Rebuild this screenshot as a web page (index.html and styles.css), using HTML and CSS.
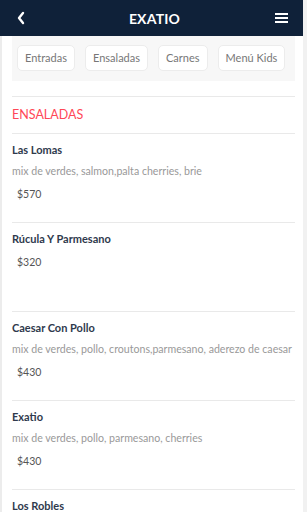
FILE: index.html
```html
<!DOCTYPE html>
<html lang="es">
<head>
    <meta charset="UTF-8">
    <meta name="viewport" content="width=device-width, initial-scale=1.0">
    <title>EXATIO</title>
    <link rel="stylesheet" href="styles.css">
</head>
<body>
    <div class="page">
        <header class="topbar">
            <svg class="back" width="10" height="14" viewBox="0 0 10 14">
                <path d="M7 2 L3 7 L7 12" fill="none" stroke="#fff" stroke-width="2.4" stroke-linecap="round" stroke-linejoin="round"/>
            </svg>
            <h1>EXATIO</h1>
            <svg class="menu" width="14" height="12" viewBox="0 0 14 12">
                <rect x="0" y="1" width="13" height="2" fill="#fff"/>
                <rect x="0" y="5" width="13" height="2" fill="#fff"/>
                <rect x="0" y="9" width="13" height="2" fill="#fff"/>
            </svg>
        </header>

        <main class="content">
            <nav class="categories">
                <span class="cat">Entradas</span>
                <span class="cat">Ensaladas</span>
                <span class="cat">Carnes</span>
                <span class="cat">Menú Kids</span>
                <span class="cat">Postres</span>
            </nav>

            <h2 class="section-title">ENSALADAS</h2>

            <div class="item">
                <div class="name">Las Lomas</div>
                <div class="desc">mix de verdes, salmon,palta cherries, brie</div>
                <div class="price">$570</div>
            </div>
            <div class="item">
                <div class="name">Rúcula Y Parmesano</div>
                <div class="desc"></div>
                <div class="price">$320</div>
            </div>
            <div class="item">
                <div class="name">Caesar Con Pollo</div>
                <div class="desc">mix de verdes, pollo, croutons,parmesano, aderezo de caesar</div>
                <div class="price">$430</div>
            </div>
            <div class="item">
                <div class="name">Exatio</div>
                <div class="desc">mix de verdes, pollo, parmesano, cherries</div>
                <div class="price">$430</div>
            </div>
            <div class="item">
                <div class="name">Los Robles</div>
            </div>
        </main>
    </div>
</body>
</html>
```

FILE: styles.css
```css
html, body {
    margin: 0;
    padding: 0;
    height: 100%;
    overflow: hidden;
}
body {
    font-family: Lato, "Open Sans", sans-serif;
    background-color: #f1f1f1;
}
.page {
    width: 303px;
    height: 100%;
    background-color: #fff;
}
.topbar {
    height: 36px;
    background-color: #0f2139;
    display: flex;
    align-items: center;
    justify-content: space-between;
    padding: 0 14px 0 16px;
}
.topbar h1 {
    margin: 0;
    color: #fff;
    font-size: 14px;
    font-weight: 700;
    letter-spacing: 0.2px;
    padding-left: 8px;
}
.back,
.menu {
    display: block;
}
.content {
    border-left: 2px solid #ececec;
    padding: 0 8px 0 10px;
    height: 100%;
}
.categories {
    background-color: #f7f7f7;
    display: flex;
    gap: 10px;
    padding: 9px 0 10px 5px;
    margin-bottom: 15px;
    overflow: hidden;
    white-space: nowrap;
}
.cat {
    flex: none;
    background-color: #fff;
    border: 1px solid #ececec;
    border-radius: 5px;
    height: 24px;
    line-height: 24px;
    padding: 0 7px;
    font-size: 11px;
    color: #777;
}
.section-title {
    margin: 0;
    border-top: 1px solid #e9e9e9;
    color: #ff4757;
    font-size: 12.5px;
    font-weight: 400;
    height: 36px;
    line-height: 36px;
}
.item {
    border-top: 1px solid #e9e9e9;
    height: 80px;
    padding-top: 8px;
}
.name {
    font-size: 11px;
    font-weight: 700;
    color: #2f3a4d;
    line-height: 16px;
}
.desc {
    margin-top: 5px;
    font-size: 10.6px;
    color: #999;
    line-height: 16px;
    white-space: nowrap;
}
.desc:empty {
    height: 0;
}
.price {
    margin: 7px 0 0 5px;
    font-size: 10.5px;
    color: #555;
    line-height: 16px;
}
```
